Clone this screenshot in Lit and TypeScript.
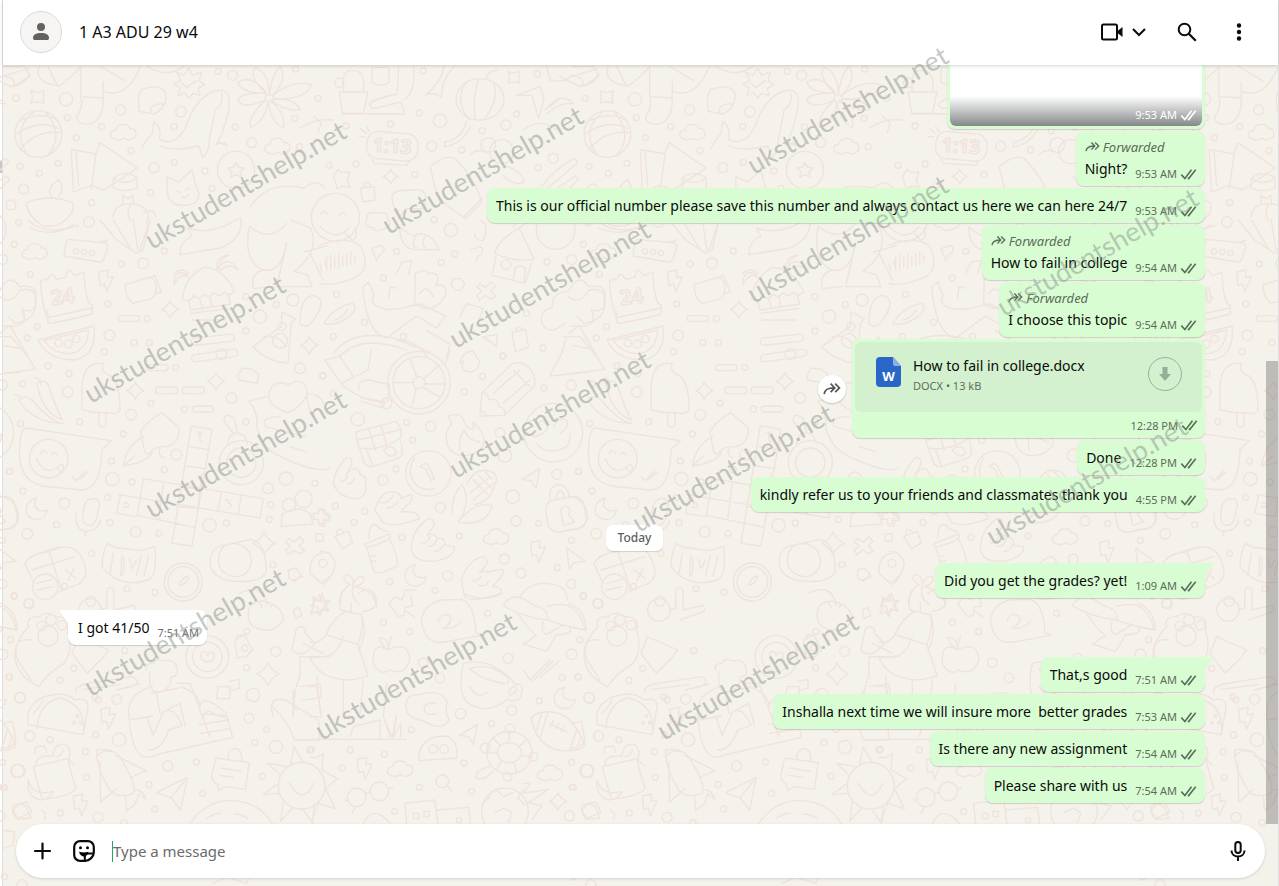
import { LitElement, html, css, svg, nothing } from "lit";
import { customElement, property } from "lit/decorators.js";

type Message = {
  kind: "text" | "photo" | "file" | "date";
  text?: string;
  time?: string;
  side?: "in" | "out";
  forwarded?: boolean;
  tail?: boolean;
  gap?: boolean;
};

const MESSAGES: Message[] = [
  { kind: "photo", time: "9:53 AM", side: "out" },
  { kind: "text", text: "Night?", time: "9:53 AM", side: "out", forwarded: true },
  { kind: "text", text: "This is our official number please save this number and always contact us here we can here 24/7", time: "9:53 AM", side: "out" },
  { kind: "text", text: "How to fail in college", time: "9:54 AM", side: "out", forwarded: true },
  { kind: "text", text: "I choose this topic", time: "9:54 AM", side: "out", forwarded: true },
  { kind: "file", text: "How to fail in college.docx", time: "12:28 PM", side: "out" },
  { kind: "text", text: "Done", time: "12:28 PM", side: "out" },
  { kind: "text", text: "kindly refer us to your friends and classmates thank you", time: "4:55 PM", side: "out" },
  { kind: "date", text: "Today" },
  { kind: "text", text: "Did you get the grades? yet!", time: "1:09 AM", side: "out", tail: true },
  { kind: "text", text: "I got 41/50", time: "7:51 AM", side: "in", tail: true, gap: true },
  { kind: "text", text: "That,s good", time: "7:51 AM", side: "out", tail: true, gap: true },
  { kind: "text", text: "Inshalla next time we will insure more  better grades", time: "7:53 AM", side: "out" },
  { kind: "text", text: "Is there any new assignment", time: "7:54 AM", side: "out" },
  { kind: "text", text: "Please share with us", time: "7:54 AM", side: "out" },
];

/* Start of each stamp's baseline, in page coordinates. */
const STAMPS = [
  [152, 250], [389, 235], [754, 175], [754, 304], [1004, 317], [456, 349], [91, 404],
  [152, 519], [456, 479], [639, 533], [993, 546], [91, 697], [322, 741], [664, 741],
];

const dots = (list: string) =>
  list.split(" ").map((d) => {
    const [x, y, r] = d.split(",");
    return svg`<circle cx=${x} cy=${y} r=${r}></circle>`;
  });
const sparkle = (x: number, y: number, s = 22) =>
  svg`<path d="M${x} ${y - s}q${s * 0.3} ${s * 0.7} ${s} ${s}q${-s * 0.7} ${s * 0.3} ${-s} ${s}q${-s * 0.3} ${-s * 0.7} ${-s} ${-s}q${s * 0.7} ${-s * 0.3} ${s} ${-s}z"></path>`;
const cloud = (x: number, y: number) =>
  svg`<path d="M${x - 30} ${y + 18}c-14-4-14-24 6-26c2-22 38-22 42-4c18-4 24 22 10 28c-8 6-20 8-28 0c-8 6-22 8-30 2z"></path>`;
const bolt = (x: number, y: number) =>
  svg`<path d="M${x - 22} ${y - 28}l28-6l-2 22l18-2l-20 46l-6-24l-14 4z"></path>`;
const moon = (x: number, y: number) =>
  svg`<path d="M${x} ${y - 32}c-40 6-44 62 0 64c20 0 30-14 32-28c-22 10-50-8-32-36z"></path>`;
const plane = (x: number, y: number) =>
  svg`<path d="M${x - 28} ${y + 4}l54-32l-12 60l-14-24z"></path>`;

const doodles = svg`
  <g transform="scale(.3333)">
    ${dots("48,295,9 198,298,20 362,330,15 202,353,9 305,380,9 229,413,9 393,452,9 522,380,9 543,335,16 655,214,9 698,226,15 60,499,9 118,520,9 174,490,9 462,503,15 523,487,9 615,513,9 451,578,9 71,567,15 33,615,15 275,608,9 636,565,9 706,381,9 885,355,9 755,428,15 898,440,9 954,295,9 887,207,9 115,402,70 808,295,12 708,510,56")}
    <path d="M60 362q70-30 112 0M46 404q70-50 130-18M60 448q50-60 124-50M100 336q-70 60-12 134M136 336q60 70 6 132"></path>
    <path d="M93 272q22 10 40 0q-8 20 0 38q-22-8-40 0q8-20 0-38z"></path>
    <path d="M8 200h66l16 28l-46 30l-6-22l-30-10M118 198q-20 50 60 60q30-20 64-58M144 200l26 54"></path>
    <path d="M242 200v90q10 30-12 60q0 26 40 22q40-10 40-74v-52M300 198l74 44M248 290l60 4M310 274q70 26 112-76"></path>
    <path d="M426 268q60-20 72 14q4 40-36 60l-44-8q-8-50 8-66M452 338q-4-30 38-26"></path>
    <path d="M440 198q60 40 112 0M530 216l22 10l14-22l12 22l26-10l-6 26l16 12l-20 12l6 20l-22-6l-12 14l-12-16l-20 10l6-24l-18-12l20-10zM546 250l14 12l30-20"></path>
    <path d="M426 444q14-28 30-42l6-38q26 22 16 54q60 30 92-70q40-80 100-78q34 18 4 104q-10 40-26 60q34-12 32 4l-26-14M480 438q40 18 116 0l12 34q20-12 20-54l18-90q26-14 20-50"></path>
    <path d="M800 284q-60-60-32-82q40 20 40 82q10-70 34-84q22 40-26 88q60-50 118-34q-10 44-114 44q60-6 82 30q-40 10-92-28q50 40 40 84q-38-20-46-78q-10 60-52 76q-10-30 44-82q-60 28-82 4q0-26 78-24q-70-2-78-34q40-24 84 30"></path>
    <path d="M214 448l74 14l12-34l112 76l-100 66l-38-14l-54 20zM228 456l8 100M288 462l-14 106M340 534q36-26 72 0v30q-40 16-72 0zM340 534q36 26 72 0"></path>
    <path d="M78 608q70-28 140 0q10 40-50 70h-40q-46-30-50-70M160 594q-30-20 16-56q20 30 0 50M500 530l36 16l40-36l12 50q20 30-6 50q-60 20-78-20q-4-30-4-60M528 572l12 6M556 570l12-6M545 590l12 4l8-10"></path>
    <path d="M708 488l8 14l16 2l-12 12l4 16l-16-8l-16 8l4-16l-12-12l16-2zM752 620q50-80 160-56q40-30 60 0"></path>
    <path d="M340 650q0-40 60-40q60 14 40 60M370 614l-2-28l16 10l14-10l2 28M392 612q-16 30 0 50M430 640q30-20 38 10"></path>
    <path d="M900 384q50-30 100-24M940 348l24 20l-10 30"></path>
    ${cloud(834, 440)}${cloud(372, 398)}
  </g>
  <g transform="translate(320 60) scale(.3333)">
    ${dots("78,198,9 212,192,9 298,159,9 360,182,20 335,259,15 425,270,9 487,212,9 558,195,15 590,162,9 310,33,9 652,42,9 27,316,9 108,312,9 285,344,9 393,510,20 342,479,9 405,582,9 363,608,9 230,574,9 190,654,9 50,703,9 134,787,9 40,830,9 250,830,9 655,323,9 700,295,15 681,606,9 755,598,15 669,864,9 620,760,9 549,888,9 58,68,14 505,255,22 545,275,36 707,510,58 558,614,14")}
    ${sparkle(212, 350)}
    <path d="M564 34q18 8 36 0q-8 18 0 36q-18-8-36 0q8-18 0-36z"></path>
    <path d="M58 96h86l-14 64H68zM70 94q-10-70 34-62q34 4 26 62M156 22h50l2 44q-26 20-52 0zM66 162h190l-14-36l-80 20q-46-20 70-44l4-84M250 120q40-20 30-110M318 104q50-40 54-90l54-14q-60 40-62 112q-20-16-46-8"></path>
    <ellipse cx="480" cy="118" rx="72" ry="62"></ellipse>
    <path d="M440 66q-40 50 6 112M476 56q-20 60-10 122M520 66q20 50-26 110M498 54l8-16l24-8M440 182l-6 20q-20 40-60 44v14q50-6 76-58"></path>
    <path d="M590 106l70-26l12 36l-16 60l-20-70zM676 150q50-60 86-18q-40-10-80 30M690 140l30-26M610 210q50-40 100 0M676 0l14 60q50 10 60-10l84-24M720 50l60 30q50-10 54-40"></path>
    <rect x="140" y="218" width="154" height="82" rx="34" transform="rotate(5 217 259)"></rect>
    <path d="M140 200l10 16M122 206l16 14M118 230h16M156 298l6 12l100 6l4-12"></path>
    <text x="158" y="278" font-size="58" font-family="Noto Sans" font-weight="700" transform="rotate(4 217 259)">1:13</text>
    <path d="M330 320q50-40 76-24q60 60 80 130l-50 50q-60-40-84-70zM434 468l54-54M450 284q20-20 50-8M556 318q60 20 54 50q-30 10-60-20"></path>
    <path d="M40 350l14-22l12 10l24-2l-8 24l8 22l-24-4l-14 10l-6-22zM122 384l40-4l4 40l-38 6zM130 382q6-30 24-2"></path>
    <circle cx="46" cy="472" r="72"></circle>
    <path d="M4 462q8-16 18 0M58 466q10-16 20 0M0 500q50 50 90 0M76 520l20 22q20-10 8-36"></path>
    <path d="M0 556q70-30 120 0q36 70-14 96q-70 30-106 18M20 590v30M32 584v46M44 592v30M56 580v46M68 588v30M80 582v36M92 576v36M104 586v20"></path>
    <path d="M140 480q0-26 20-22l20 2q22-10 22 16q20 20-8 30q-30 14-36-4q-30 0-18-22M216 410q0-20 60-20q40-6 40 20v36h-60l-20 30l-4-26q-16-8-16-40"></path>
    <path d="M240 500q40 40 60 20q40 4 58 50l-80-2q-40-10-38-68M290 520q-20 40 0 44M316 524q-14 30 0 40M464 522q0 20 26 20q20-50-8-60"></path>
    <path d="M156 566l28-10q20 12-6 30l-8 16zM452 570l28-10q20 12-6 30l-8 16M230 640l16-34l30-4l-10 40M524 580q10-40 74-76l44 94q-60 10-118-18M528 590l-12 56l100 24l18-60M580 660l6-36q20-16 30 4l-4 40M580 500l14-24M596 504l26-16"></path>
    <path d="M664 380q60-70 100-84q16 10 0 20l-90 76M690 400l76-52q18 10 0 20l-50 50"></path>
    <path d="M130 680l16-14l16 40l-6 20q20 30 84 20l60-14l76 36l-26 36l-60-36l-90 66q-60-10-72-154M206 714l4-34l18 4M286 640q30-16 40 0q40-4 22 36q40-4 26 34q-40 60-90 20zM300 700q20-30 40 10"></path>
    <path d="M398 656h24l12 16l-10 18h-20l-10-16zM480 672l16 10l18-16l12 14l-14 14l16 14l-16 10l-16-12l-18 14l-8-14l16-12l-16-12z"></path>
    <path d="M12 790q30-50 86-60q20 20-20 46q-40 24-66 14M42 780q20 0 40-30M40 880q60-80 200-40q60 10 80 50M60 890q60-70 200-20M230 840l100 36M320 812l70 40l-10 40"></path>
    <path d="M736 790q-50 40-70 0q-10-40 30-46q0-50 50-50q30-60 60-14q60-10 46 40q10 60-60 70l-20-20M730 830h50l50 60M740 832l-20 60M576 818l40-10l10 54l-40 12zM588 814q4-24 20-4M490 830l40-6v36z"></path>
    <path d="M420 770l20-40l50 16l-20 50"></path>
  </g>
  <g transform="translate(0 220) scale(.3333)">
    ${dots("43,73,9 91,163,9 364,132,9 429,130,16 323,252,9 442,296,9 112,320,9 82,354,9 328,346,16 402,368,9 448,368,9 313,395,9 144,438,9 207,461,9 527,442,9 203,516,16 68,491,9 62,611,9 239,605,9 394,584,16 453,550,9 370,642,9 553,567,9 529,704,16 334,723,9 337,777,20 493,749,9 29,754,9 69,813,9 396,786,9 193,850,16 170,914,9 82,941,16 323,832,9 330,908,9 407,935,16 477,940,9 275,1000,9 493,93,9 694,534,16 738,333,9 738,606,9 879,240,18 780,290,20 900,445,16 829,254,9 968,467,9 804,805,16 858,776,20 945,790,9 813,854,9 867,855,20 911,837,26 808,898,9 629,916,20 679,909,9 738,230,9 56,8,9 267,6,16")}
    <path d="M84 0q50 50 150 16M90 24q70 30 130-10M204 58l106 10q14 2 14 14l-12 34q-6 12-14 10l-106-18q4-40 12-50M300 68l24-8"></path>${dots("228,94,8 252,96,8 276,99,8")}${cloud(106, 96)}
    <path d="M122 182l24-6q6-26 24 2l28-6q6-40 24-6l30-8q2 60 14 90l12 10l-2 24q-70 20-130 28l-10-34q-14-50-14-94M140 272q8 26 6 20l130-28"></path>
    <text x="152" y="250" font-size="62" font-family="Noto Sans" font-weight="700" transform="rotate(-8 196 230)">24</text>
    ${bolt(318, 184)}
    <path d="M376 194l70-22q20 0 22 30q0 34-20 36l-50 12q-24-20-22-56M450 174l14-8l20 50l-14 4M114 360l168-42q10 90-60 102q-80 0-108-60M132 362l134-32q-4 60-50 70q-50 6-84-38"></path>
    ${dots("176,369,11 205,372,12 229,357,11")}${sparkle(510, 268, 26)}${sparkle(406, 512, 26)}${sparkle(648, 484, 26)}${sparkle(928, 376, 26)}
    <rect x="355" y="287" width="64" height="17" rx="8"></rect><rect x="467" y="501" width="66" height="20" rx="9"></rect><rect x="547" y="501" width="66" height="20" rx="9"></rect><rect x="577" y="558" width="64" height="18" rx="9"></rect><rect x="440" y="434" width="64" height="18" rx="9"></rect>
    <path d="M548 236q4-60 62-94q60 0 94 74q-20 16-30 0q-16 20-32 2q-14 20-30 4q-14 24-30 4q-14 26-34 10M566 240l6 30l120-18l-8-30M572 280l116-14M600 240l8 26M630 230l6 30M578 300h100"></path>
    <path d="M650 146q0-40 36-40q-30 10-28 44M654 144q30-40 60 4q-30-20-52 4M562 164q-40-20-40 30q20-40 44-22M566 160q-20-20-44 0M300 0l50 60l60 40l20-10l20-90M340 0l54 90M400 0l14 90M450 0l-30 90M540 104q0-40 36-56l-14-24q60 20 120-10l40-20q10 60-60 90z"></path>
    <rect x="574" y="348" width="130" height="22" rx="11" transform="rotate(-6 640 360)"></rect><rect x="574" y="396" width="140" height="22" rx="11" transform="rotate(-8 640 406)"></rect><circle cx="664" cy="402" r="16"></circle>
    <path d="M748 20q-20 100 40 130q60 10 70-80M750 20q60 50 110-10M860 70l-30 130h106l-14-36l-40-10q80-60 50-130l-60-24M790 150q-40 10-30 56l60-6M914 96l70-20M930 100l40 80M960 130l6 26M974 122l8 30"></path>
    <path d="M846 276l40 20l-12 14l-10 120q-60-4-106-50l86-60zM790 350q40-10 70 30M900 310q0-80 40-84q40 10 10 60q-30 50-50 24M714 466l12-22l30 4l20 14l-4 28l-56-10z"></path>
    <circle cx="840" cy="362" r="22"></circle><circle cx="846" cy="320" r="12"></circle>
    <path d="M246 570v-70q4-70 50-70h14q-10 20 10 32q40 10 40 108q-10 16-40 8q-40 2-74-8M296 578v36q12 16 22 0v-38M0 230q30 30 60-20q60-10 46 50q-14 20-40 8q30 60-60 50M0 340l30-24l76 132l-100 12M10 376l50 10"></path>
    <path d="M56 540q20-20 40 0q60 70 94 70q-90 0-134-70M110 490q30-20 40 20q20 60 38 90q-60-20-78-110M104 474q20 0 18 20M44 524q16 0 20 14"></path>
    <path d="M78 624l256 38l-28 26q-2 120-60 122l-120-12q-80-20-66-130q2-40 18-44"></path><circle cx="146" cy="716" r="58"></circle><path d="M122 700q6-16 18 0M154 704q10-14 18 2M108 716q30 60 74 18M170 744l14 14q12-10 2-26M216 770l14 12l26-28M240 778l24-22"></path>
    <path d="M486 578l52 46q0 50-40 56q-34 0-44 14q-10 16-20 0l-12-60q30-40 64-56M432 650q-50 20-62 88q70-10 88-40M370 738l34-30M480 684q-10 20 12 30"></path>
    <path d="M574 618l62 10l-60 350l-60-8zM356 824l424 70l10-58l-360-60l-18 110l174 36M362 824l-12 56l60 10M490 790l-14 110M606 760l-14 120M664 816l-10 56M724 828l-10 56M570 680l60 10M560 738l60 8M540 800l50 6M530 860l60 4"></path>
    <path d="M590 640h20M600 634v26q2 8 8 6M372 852q14-10 14 8q-16 6-16-2M676 840q16 0 10 10q16 2 2 14"></path>
    <circle cx="724" cy="728" r="66"></circle><circle cx="724" cy="728" r="44"></circle><path d="M684 672q0-30 28-34q26 4 30 34M700 640l-28-36q0-30 30-10l10 40"></path>
    <path d="M806 524q10-50 60-30q50-30 56 30q-20 40-58 54q-60-20-58-54M800 530l-54 14q30 30 24 80q20 60 60 80q120 60 160 40M840 590q-60 0-44 30l120 30M870 680l50 16M940 590q-16-20-20-70q40 0 50 30"></path>
    ${moon(110, 866)}
    <path d="M250 870q4-34 30-34t14 36q-4 46-28 44t-16-46M228 880q-4 50 30 54q38-2 44-34M258 934l-2 14M0 830q50 4 56 60q-4 40-56 38M846 884q0 30-4 36l96-8l-6-30q-40-30-86 2M940 880h16v-14h14v14h16v16h-16v16h-14v-14h-16z"></path>
    <path d="M866 956l16 10l18-16l12 14l-14 14l16 14l-16 10l-16-12l-18 14l-8-14l16-12l-16-12z"></path><rect x="948" y="942" width="22" height="22" rx="4"></rect>
    ${sparkle(792, 970, 34)}
  </g>
  <g transform="translate(320 350) scale(.3333)">
    ${dots("297,98,94 297,98,78 297,98,18 113,208,20 260,217,9 332,229,15 278,271,9 228,357,9 189,390,15 325,370,68 361,472,15 134,484,9 46,468,9 102,517,9 246,562,9 383,677,15 209,695,9 345,721,9 433,125,9 488,79,9 548,19,9 672,115,9 754,105,15 540,248,14 555,317,20 710,373,15 775,364,9 578,440,20 588,513,15 656,520,9 754,571,9 553,627,15 603,669,15 712,653,9 754,702,14 790,738,9 418,558,9 40,130,9 9,78,9 700,248,88 9,640,12 200,160,16")}
    <path d="M290 80l-20-54M314 84l44-40M316 102h60M310 112l50 30M288 116l-10 50M280 98h-58"></path>
    <path d="M14 30l40-10l30-20M14 30l50 70l80-40l10-60M60 20l40 60M64 104q80 60 140 50l4-50l-60-14q-40 0-30 30M124 144l70 10l-4 20l-66-20M376 40l14-40M420 40q10-40 40-36q10 20 20 30q-10 40-40 30q-20 0-10-30z"></path>
    <path d="M480 198l6-70l90-86q40-16 64 30q10 30 0 40l-86 84zM486 128q20 0 20 22q30-10 30 20q20 0 18 20M580 60l50 50M520 130l80-70M550 160l80-70M690 78l40-78M690 78l120-12M482 180l20 18"></path>
    <path d="M108 246l120-32q20 20 14 50q-60 40-124 30q-10-20-10-48M146 236l20 64M184 226l16 60M114 270l124-30M118 294l10 30q8 30 30 26l80-26q16-10 4-50M140 300l18 48M190 300q30-24 40 10q-20 20-40-10"></path>
    <path d="M384 200q40-20 50 20q10 20 26 16v-20q60 60 10 90q-60 30-88-20q-10-50 12-60q0-20-10-26M420 300q-6-40 14-60q6 30 46 36M300 350q14-16 24-4l20 40l-10 6l-18-36zM284 324q-30 50 10 86q30 14 50 6"></path>
    <path d="M40 400q4-40 40-78q20 0 14 24l-16 30q30-40 44 0q20 0 14 24q10 30-20 46q-60 0-76-46M62 390q10 10 20-10M84 400q10 6 20-16M164 480q20-60 50-54q30 0 30 20l30-14q10 20-20 40l-10 14q50-6 54 20q-80 30-110 10zM180 456q20 10 40-20M200 474q20 0 34-20"></path>
    <path d="M274 600q0-60 50-94q20 0 18 20l-20 30q20-10 30 10q20-10 24 20l28 4q4 30-60 44q-60 4-70-34M304 580q20 0 26-20M324 590q20 0 26-20M344 604q20 0 26-20M424 690q20-60 64-70q20 10 10 26l-20 24q10-10 24-4l46-8q10 10-20 40l-10 12q30 0 26 20q-90 30-110 10zM456 690q10 10 26-10M476 704q20 10 30-10"></path>
    <path d="M396 490q0-60 30-86q30 50-10 112q40-60 100-50q-10 60-100 52M440 400q30-50 70-36q30 10 14 40q-10 50-60 60M460 390l44 44M476 376l40 40M450 430l60-50M460 450l60-50M496 366l20 20"></path>
    <rect x="680" y="444" width="116" height="98" rx="30" transform="rotate(-10 738 493)"></rect><path d="M690 450q-6-46 30-46q30 10 26 40M708 446q4-30 20-20l6 18M724 494q-6-24 12-26q20 6 10 26l18 22l-32 10zM612 230q20-30 40-10q20-20 30 10q0 20-40 30q-30-10-30-30M700 230q20-30 40-20q10 20-20 40M650 280q30 40 90 10q14-20 10-40"></path>
    ${plane(634, 384)}${cloud(530, 562)}${bolt(654, 606)}${moon(286, 676)}
    <path d="M740 594l56 40l-34 4l-14 20zM134 582l76-30q10 20-70 40zM140 590l20 70q10 14 30 6l40-16q10-20-20-80M146 566l4-34q14-20 30 4l24 10M150 620l16-4M152 636l16-4M44 560l40-16l14 34l-30 18zM50 556q0-30 20-10M0 604q40 0 46 40q-10 40-36 60M0 480h16v16h14v16h-14v16h-16"></path>
    <path d="M60 760q0-40 30-56q-30-20-10-30q20 0 20 30q10-30 30-24q10 20-26 30q60 10 66 60M100 704q-10 40 20 60"></path>
  </g>
  <g transform="translate(0 560) scale(.3333)">
    ${dots("43,108,9 88,131,15 194,79,9 273,124,15 381,86,9 465,97,9 374,272,9 221,325,9 180,361,9 28,351,9 350,418,15 285,411,9 61,413,16 740,323,9 827,274,15 759,405,20 741,214,9 819,14,9 136,80,38 144,228,30 550,66,57 550,66,46 622,291,64 622,291,44 125,198,14 153,180,16 186,196,14 270,150,34 734,264,9")}
    <path d="M74 10q20-30 66-34l40-14q60-10 76 60q10 30-20 50l-60 24M74 10l28 60M90 -10l90-30M146 -30l40 124M96 30l130-40M196 30l34 26M222 26l-18 36M112 70l46-12M112 90l46-10"></path>
    <path d="M306 20q0-40 16-70q20 14 40 14l60 8l42-12q10 90-20 100q-70 24-120-20zM340 -20l-10 60M366 -14l-4 60q10 10 10-50M424 -14l-14 60M446 -12l-14 60M388 -4l8 30l14-26"></path>
    <path d="M540 76q0-20 26-28q0 20-26 28M632 20q-10-60 50-66l70-16q50 10 46 100q-20 30-80 26q-70 0-86-44M656 0q0-50 50-50q50 10 48 60q-10 40-50 40q-50-10-48-50"></path>
    <path d="M0 130q50 20 52 80l-52-10M46 270q10-40 40-70q-10-30 30-30q24-20 50 0q50 0 36 40q20 60-10 100q-50 30-76 70q-80-40-70-110"></path>
    <path d="M236 230l90 40l-14 20l-50 50l-46-60zM320 90q10-16 22 0v60l60-14q10 14 0 20l-70 24M300 150l20-6v-50M350 390l70-18M226 396q0-20 40-26l130-20q20 8 14 20l-20 12M250 388l110-14"></path>
    <path d="M440 330q-6-20 20-20q10-20 30-6q30-10 40 16q10 30-16 30q0 40-40 46q-30 0-24-60M388 480q-10-60 30-84l40-20M388 480l70-12M456 400l80-16M530 370l40 0l60 160M470 400l10 60M600 440q4-30 40-10l40 30M540 380q60 20 60 60"></path>
    <path d="M602 280q12-14 20 6q10-20 20-4q4 20-22 26q-20-10-18-28M704 240l30-16l24 46l-20 20l-26 4zM712 238q-6-20 16-12M654 380h36v36h-40zM690 364l26-6l2 26l-28 8"></path>
    ${sparkle(804, 342, 34)}${bolt(324, 476)}
    <path d="M718 100q60-30 80 20M746 180q-10-60 50-56q60 20 52 60q-30 40-80 20q-16-6-22-24M780 130l6 12M800 124v14M816 130l-4 12M866 30l20-6l18 20l-20 20l-18-10zM880 60l30-10M880 150l16-8l10 24l-20 10zM930 40q0-60 40-60M930 40l34 30l30-24M940 110l14 14l4-20l10 22l14-6l-10 18l14 14l-20-2l-6 20l-10-16l-18 8l8-18z"></path>
    <path d="M886 220q0-20 20-20q14 6 10 20l30 30q-40 50-70 20zM900 290v60q-20 40-20 120M900 380l60-8l4 40l-60 10M820 470q-20-60 30-50q30 10 40 30M900 290h90M910 250l60 30"></path>
  </g>
  <g transform="translate(310 590) scale(.3333)">
    ${dots("220,97,9 299,125,9 533,70,9 595,205,15 785,193,16 809,149,9 756,263,9 804,261,9 688,332,9 837,323,16 452,371,16 605,361,15 545,401,9 304,419,9 121,480,9 96,534,9 223,493,9 462,519,9 328,592,9 254,664,9 485,604,9 785,517,9 786,592,9 829,543,20 778,678,15 390,264,14 340,218,14 397,574,19 370,477,13 402,477,13 140,622,28 208,604,28 585,664,70 820,17,9 862,40,14 600,416,14 525,474,14 670,500,13 593,560,13 4,478,9")}
    <path d="M10 20l20 14l6-24l10 26l14-4l-12 14l8 18l-18-8l-10 14l-6-20l-20-2l14-12zM100 0q-20 30-6 60l30 8v-30M120 68l34 6q10 30-10 90l-96-30q20-50 60-70M144 164l30 94q-60 20-100 6q-50-10-74-60M48 134q-20 30-48 22M100 140q-20 60-60 60l-40 4M154 72q20 60-8 110M146 10q40-30 54 20q0 30-40 34M100 270v100M160 270l-10 100M20 260l10 100"></path>
    <path d="M236 40l20-20l20 10l10-30h30M236 40l30 40l16-4l4-24l22-4l-6-30M290 64l22 18M334 90q10-50 60-60l60-2q40 14 44 100l16 8l-110 20q-60 10-70-66M384 94q10-30 36-16q10 20-20 36q30 6 54-20M460 10q60 30 116 0"></path>
    <path d="M236 180q-50-30-46 40q20 40 50 20q40 20 60-30q-6-60-64-30q-2-20 10-42M236 180q-20-10-30-36q30-4 30 36M580 46q30-50 90 0q50 10 42 44q-80-10-132-44M712 50q90-30 114 70q-60-10-114-30M630 20q40-60 120-30q20 10 22 40M620 66q40 60 60 70l-40 26l70 22l30-50q50 0 40-24M700 94q-10 30 10 40l50-30"></path>
    <path d="M460 220q40-10 80 4q60 30 76 60q30-10 16 40q-20 14-40 4q-60 50-120 10q-30-30-12-118M480 236q60-20 110 24q20 30-30 16q-60-14-80-40M596 310q10-30 24-16q0 16-24 24M480 290q20 40 54 16"></path>
    <path d="M640 240l20 30l60-60M668 274l60-60M690 264l56-50M870 150q-60-10-40 60l40 60M288 350q0-40 40-36q70-20 84 24q-10 30 6 50q-20 40-80 4q-50-10-50-42M372 340q-30-4-30 20q10 20 36 10M380 342l-14-6"></path>
    <path d="M664 390q0-20 40-24q80-10 120 100q-10 20-70 16q-70-10-90-92M694 372l-14 50M712 370l-20 70M800 420l-20 60M812 440l-12 40M718 400l54 26M730 392l-8 20M746 398l-8 20M762 406l-8 20"></path>
    <ellipse cx="598" cy="488" rx="68" ry="64"></ellipse><ellipse cx="598" cy="488" rx="36" ry="30"></ellipse><path d="M598 424v34M650 450l-24 20M664 500l-30-4M620 548l-8-32M560 540l14-28M530 490l34-4M550 444l20 22M540 530q-50 10-40 34q20 10 50-20"></path>
    <path d="M326 512q0-70 70-74q50 0 44 66zM414 590l10 12M0 448h288M120 440l10-30l80-20v56M240 440l-20-60l26 60l14-64l-10 66l22-40v40M220 380l10-100M0 290h20l14 90h-34"></path>
    ${plane(476, 432)}${bolt(164, 536)}${cloud(272, 538)}${cloud(722, 550)}${moon(764, 324)}${sparkle(744, 634, 26)}
    <path d="M168 610l14-4M110 632l-8-4M236 596l12-2M136 652l-10 18M284 640l90-10l10 72M284 640l6 62M380 660l96-8l6 50M310 670h16v16h-16zM342 664h16v16h-16zM440 684h14v14h-14zM560 600l20 20l28-12M556 668l26-14l24 14l-10 28M520 640l20-20M640 600l-16 24l20 20M640 580h20l-20 30l76-12l-60 40l40 10l-30 40M160 700q30-60 80 0M816 660l20-20l20 10l14 34l-40 4z"></path>
    <path d="M0 500q20 10 40-10l-4 50l46 26l-36 30l30 60l-50-16l-20 50"></path>
  </g>
  <g transform="translate(0 690) scale(.3333)">
    ${dots("89,138,15 150,149,9 256,185,9 259,262,9 294,30,9 287,135,9 357,149,20 55,243,20 503,228,15 589,216,9 447,284,9 464,357,9 608,310,9 787,259,9 765,158,9 747,85,15 800,118,9 828,171,20 930,180,9 181,369,9 294,382,15 372,398,9 905,287,70 13,292,9 13,560,9 66,584,15")}
    <path d="M84 104q-10-60 50-84q60-20 90 10q40-10 40 20l-14 84zM110 114q10-80 70-90q80 20 70 110M100 70q20-20 30-40"></path>${dots("232,78,4 222,98,4 242,98,4")}
    ${bolt(242, 346)}
    <path d="M388 96q10 110 60 106l30-10l220-50l-18-66l-70-4M440 80l20 56l30-70q30-20 56 40l-40 14q-20 60-60 60M500 60l40-20l16 68M610 80q10-30 40-4l30 6M596 104l90-14M602 130l90-14"></path>
    <path d="M100 230l104-24q10 50 24 88q-10 24-100 34q-20-60-28-98M108 224q0-30 50-26l6-20q10-20 34-14q20 20 6 50M104 190l4-20l26-2l6 20M84 270q14 50 76 34q-10 24-40 26q-40-10-36-60M166 200q20 0 24-20M204 206l20 20"></path>
    <path d="M290 180q60-10 80 40q40 60 30 90q-60 20-76-20q-36-60-34-110M294 196q20-20 40-10M300 216l2 120l46-40M346 196l92 46l-50 22M376 320l4 42l26-20l10-30l22 16q-10-30-36-30M470 308l92-46l-20 98l-28-36l-40-14zM514 322l40-50"></path>
    <path d="M648 204l100 14l-12 80l-60-8l-20 12l-4-20q-20-10-16-30zM684 204q0-30 26-28q20 10 14 36M664 234l60 10M660 256l40 6M868 280q40 70 74 0M872 224l10-54l28 48M840 254l-38-34l60 10M836 310l-46 4l40-30M850 338l-8 56l36-40M910 360l28 40l4-50"></path>
    <path d="M816 50q0-30 40-20l100 60l4 60h-76q-20-60-68-100M880 0v80M568 402q50-70 120-70q90 0 130 70M620 386q20-16 44-16M704 372q20 0 40 14M40 346l40-10l16 30l-44 20q-20-20-12-40M124 360q20 10 8 30M8 100l30-6l10 60q-20 24-40 20M8 420l36 6l-6 40l-30 10M640 580l40-20l60 20l10-28"></path>
  </g>`;

const ticks = html`<svg class="ticks" viewBox="0 0 16 11" aria-hidden="true">
  <path d="M.8 5.600l3.600 4L11 .8M7.400 9l.8.6L15.200.8" fill="none" stroke="currentColor" stroke-width="1.600"></path>
</svg>`;
const forwardGlyph = html`<svg class="fwd" viewBox="0 0 16 12" aria-hidden="true">
  <path d="M1 10.500C1.600 6.500 4 5 10 5M6.800 1.200L10.400 5 6.800 8.800M10.800 1.200L14.600 5l-3.800 3.800" fill="none" stroke="currentColor" stroke-width="1.500"></path>
</svg>`;

@customElement("chat-message")
class ChatMessage extends LitElement {
  @property({ attribute: false }) message!: Message;

  static styles = css`
    :host { display: block; }
    .row { display: flex; align-items: center; justify-content: flex-end; gap: 6px; padding: 0 61px 0 65px; }
    .row.in { justify-content: flex-start; }
    .row.gap { margin-top: 10px; }
    .bubble {
      position: relative; box-sizing: border-box; background: #d9fdd3; color: #0a0a0a;
      border-radius: 8px; padding: 8px 8px 7px 9px; box-shadow: 0 1px 1px rgba(11, 20, 26, .16);
      font-size: 14px; line-height: 20px;
    }
    .in .bubble { background: #fff; padding-left: 10px; }
    .tail { position: absolute; top: 0; right: -8px; width: 14px; height: 13px; color: #d9fdd3; }
    .in .tail { right: auto; left: -8px; color: #fff; transform: scaleX(-1); }
    .line { display: flex; align-items: flex-end; gap: 8px; }
    .text { white-space: pre-wrap; }
    .meta {
      display: flex; align-items: center; gap: 3px; flex: none; height: 12px;
      font-size: 11px; line-height: 12px; color: #5b6c5a; margin-bottom: -1px;
    }
    .in .meta { color: #6f6f6f; }
    .ticks { width: 17px; height: 11px; }
    .forwarded { display: flex; align-items: center; gap: 3px; font-size: 13px; font-style: italic; color: #5b6b59; line-height: 16px; margin-bottom: 4px; }
    .fwd { width: 15px; height: 12px; }
    .photo { width: 258px; padding: 3px; }
    .frame {
      display: flex; align-items: flex-end; justify-content: flex-end; height: 160px; border-radius: 6px;
      background: linear-gradient(#fff 130px, #85888a); padding: 0 5px 5px 0; box-sizing: border-box;
    }
    .frame .meta { color: #fff; margin: 0; }
    .file { width: 353px; padding: 3px; }
    .card { display: flex; align-items: flex-start; gap: 12px; padding: 15px 20px 14px 21px; min-height: 70px; box-sizing: border-box; border-radius: 6px; background: #d3f1ce; }
    .docicon { width: 25px; height: 30px; flex: none; }
    .doc { flex: 1; }
    .name { line-height: 17px; }
    .kind { font-size: 11px; line-height: 16px; color: #5d6f5c; margin-top: 4px; }
    .get {
      display: grid; place-items: center; width: 34px; height: 34px; padding: 0; border: 1px solid #92b59a;
      border-radius: 50%; background: none; color: #92b09a;
    }
    .get svg { width: 14px; height: 16px; }
    .file .line { height: 23px; align-items: center; justify-content: flex-end; padding-right: 4px; padding-top: 4px; box-sizing: border-box; }
    .file .meta { margin: 0; }
    .share {
      display: grid; place-items: center; width: 28px; height: 28px; padding: 0; border: 0; border-radius: 50%;
      background: #fff; color: #555; box-shadow: 0 1px 2px rgba(11, 20, 26, .2);
    }
    .share svg { width: 18px; height: 14px; }
    .date { display: flex; justify-content: center; margin: 11px 0 10px; }
    .pill {
      background: #fff; color: #5e5e5e; border-radius: 7px; padding: 3px 12px; font-size: 12px; font-weight: 500;
      line-height: 20px; box-shadow: 0 1px 1px rgba(11, 20, 26, .14);
    }
  `;

  render() {
    const m = this.message;
    if (m.kind === "date") return html`<div class="date"><span class="pill">${m.text}</span></div>`;
    const meta = html`<span class="meta">${m.time}${m.side === "out" ? ticks : nothing}</span>`;
    if (m.kind === "photo")
      return html`<div class="row"><div class="bubble photo"><div class="frame">${meta}</div></div></div>`;
    if (m.kind === "file")
      return html`<div class="row">
        <button class="share" aria-label="Forward">${forwardGlyph}</button>
        <div class="bubble file">
          <div class="card">
            <svg class="docicon" viewBox="0 0 25 30" aria-hidden="true">
              <path d="M4 0h13l8 9v17a4 4 0 0 1-4 4H4a4 4 0 0 1-4-4V4a4 4 0 0 1 4-4z" fill="#2a66c8"></path>
              <path d="M17 0l8 9h-6a2 2 0 0 1-2-2z" fill="#8fb0e6"></path>
              <text x="12.500" y="24" text-anchor="middle" font-size="13" font-weight="700" fill="#fff">W</text>
            </svg>
            <div class="doc"><div class="name">${m.text}</div><div class="kind">DOCX • 13 kB</div></div>
            <button class="get" aria-label="Download">
              <svg viewBox="0 0 14 16"><path d="M4.500 1h5v7H13L7 15 1 8h3.500z" fill="currentColor"></path></svg>
            </button>
          </div>
          <div class="line">${meta}</div>
        </div>
      </div>`;
    return html`<div class="row ${m.side} ${m.gap ? "gap" : ""}">
      <div class="bubble">
        ${m.tail
          ? html`<svg class="tail" viewBox="0 0 14 13" aria-hidden="true"><path d="M0 0h12.500c1.500 0 1.800 1 1 2L6 13H0z" fill="currentColor"></path></svg>`
          : nothing}
        ${m.forwarded ? html`<div class="forwarded">${forwardGlyph}Forwarded</div>` : nothing}
        <div class="line"><span class="text">${m.text}</span>${meta}</div>
      </div>
    </div>`;
  }
}

@customElement("app-root")
class AppRoot extends LitElement {
  static styles = css`
    :host { display: block; font-family: "Noto Sans", "Open Sans", sans-serif; color: #0a0a0a; }
    .app { position: relative; display: flex; height: 100vh; overflow: hidden; background: #fff; }
    .edge { width: 2px; padding-top: 160px; box-sizing: border-box; }
    .grip { height: 13px; background: #c6c6c6; }
    .pane { flex: 1; min-width: 0; display: flex; flex-direction: column; border-left: 1px solid #dedede; border-right: 1px solid #dedede; }
    header {
      display: flex; align-items: center; height: 65px; box-sizing: border-box; padding: 0 27px 2px 17px;
      background: #fff; box-shadow: 0 1px 3px rgba(11, 20, 26, .18); position: relative; z-index: 1;
    }
    button { border: 0; background: none; color: #0a0a0a; padding: 0; display: flex; align-items: center; }
    .avatar { width: 42px; height: 42px; margin-right: 17px; }
    h1 { flex: 1; margin: 0; font-size: 16px; font-weight: 400; line-height: 24px; }
    .call { gap: 7px; margin-right: 28px; }
    .find { margin-right: 28px; }
    .s24 { width: 24px; height: 24px; }
    .chev { width: 16px; height: 16px; }
    .chat { position: relative; flex: 1; min-height: 0; display: flex; flex-direction: column; background: #f5f1eb; }
    .wall { position: absolute; inset: -65px 0 0 -3px; width: calc(100% + 3px); height: calc(100% + 65px); fill: none; stroke: #efe3dc; stroke-width: 4; stroke-linejoin: round; stroke-linecap: round; }
    .body { position: relative; flex: 1; min-height: 0; display: flex; }
    .list {
      flex: 1; min-width: 0; display: flex; flex-direction: column; justify-content: flex-end; gap: 2px;
      overflow: hidden; padding-bottom: 21px;
    }
    .track { width: 12px; display: flex; flex-direction: column; justify-content: flex-end; }
    .thumb { height: 61%; background: rgba(0, 0, 0, .22); }
    .composer {
      position: relative; display: flex; align-items: center; height: 54px; margin: 0 13px 8px; padding: 0 15px 0 14px;
      box-sizing: border-box; background: #fff; border-radius: 27px; box-shadow: 0 1px 3px rgba(11, 20, 26, .14);
    }
    .plus { margin-right: 18px; }
    .entry { flex: 1; display: flex; margin-left: 16px; height: 21px; border-left: 1px solid #1daa61; }
    input { flex: 1; min-width: 0; border: 0; outline: 0; padding: 0; background: none; font: inherit; font-size: 15px; color: #0a0a0a; }
    input::placeholder { color: #6b6b6b; opacity: 1; }
    .stamps { position: absolute; inset: 0; width: 100%; height: 100%; pointer-events: none; z-index: 2; font-family: Lato, "Liberation Sans", sans-serif; font-size: 27px; fill: rgba(140, 148, 142, .5); }
  `;

  render() {
    return html`<div class="app">
      <div class="edge"><div class="grip"></div></div>
      <main class="pane">
        <header>
          <svg class="avatar" viewBox="0 0 42 42" aria-hidden="true">
            <circle cx="21" cy="21" r="20.500" fill="#f6f5f4" stroke="#dcdad8"></circle>
            <circle cx="21" cy="16" r="4" fill="#636261"></circle>
            <path d="M13 27c0-3.500 3-5 8-5s8 1.500 8 5c0 1.500-.8 2-2 2H15c-1.200 0-2-.5-2-2z" fill="#636261"></path>
          </svg>
          <h1>1 A3 ADU 29 w4</h1>
          <button class="call" aria-label="Video call">
            <svg class="s24" viewBox="0 0 24 24"><rect x="2" y="4.500" width="15" height="15" rx="1.500" fill="none" stroke="currentColor" stroke-width="2"></rect><path d="M17.500 11L22.500 7v10l-5-4z" fill="currentColor"></path></svg>
            <svg class="chev" viewBox="0 0 16 16"><path d="M2 5l6 6 6-6" fill="none" stroke="currentColor" stroke-width="2"></path></svg>
          </button>
          <button class="find" aria-label="Search">
            <svg class="s24" viewBox="0 0 24 24"><circle cx="9.500" cy="9.500" r="5.800" fill="none" stroke="currentColor" stroke-width="2"></circle><path d="M13.800 13.800l7 7" stroke="currentColor" stroke-width="2.200"></path></svg>
          </button>
          <button aria-label="Menu">
            <svg class="s24" viewBox="0 0 24 24" fill="currentColor"><circle cx="12" cy="5.500" r="2.200"></circle><circle cx="12" cy="12" r="2.200"></circle><circle cx="12" cy="18.500" r="2.200"></circle></svg>
          </button>
        </header>
        <section class="chat">
          <svg class="wall" aria-hidden="true">
            <g id="tile">${doodles}</g>
            ${[-569, 569, 1138, 1707].map((x) => svg`<use href="#tile" x=${x}></use>`)}
          </svg>
          <div class="body">
            <div class="list">${MESSAGES.map((m) => html`<chat-message .message=${m}></chat-message>`)}</div>
            <div class="track"><div class="thumb"></div></div>
          </div>
          <form class="composer">
            <button type="button" class="plus" aria-label="Attach">
              <svg class="s24" viewBox="0 0 24 24"><path d="M12.500 4.500v15M5 12h15" stroke="currentColor" stroke-width="2.200" stroke-linecap="round"></path></svg>
            </button>
            <button type="button" aria-label="Stickers">
              <svg class="s24" viewBox="0 0 24 24">
                <path d="M8 2.200h8A5.800 5.800 0 0 1 21.800 8v5.500c0 4-4.300 8.300-8.300 8.300H8A5.800 5.800 0 0 1 2.200 16V8A5.800 5.800 0 0 1 8 2.200z" fill="none" stroke="currentColor" stroke-width="2.200"></path>
                <circle cx="8.500" cy="8.800" r="1.500"></circle><circle cx="15.500" cy="8.800" r="1.500"></circle>
                <path d="M7 12.800c3 1 6.500 1 9.500 0c-.3 1.500-1.700 2-3 2.700v2.500c-3.500 0-5.700-2-6.500-5.200z"></path>
                <path d="M12.800 21v-2.500c0-2.500 1.500-4 4-4h4.500" fill="none" stroke="currentColor" stroke-width="2"></path>
              </svg>
            </button>
            <div class="entry"><input type="text" aria-label="Type a message" placeholder="Type a message" /></div>
            <button type="button" aria-label="Voice message">
              <svg class="s24" viewBox="0 0 24 24" fill="none" stroke="currentColor" stroke-width="2"><rect x="9.300" y="3" width="5.400" height="11" rx="2.700"></rect><path d="M5.500 11.500c0 8 13 8 13 0M12 17.500V22"></path></svg>
            </button>
          </form>
        </section>
      </main>
      <svg class="stamps" aria-hidden="true">
        ${STAMPS.map(([x, y]) => svg`<text transform="translate(${x} ${y}) rotate(-30)">ukstudentshelp.net</text>`)}
      </svg>
    </div>`;
  }
}
